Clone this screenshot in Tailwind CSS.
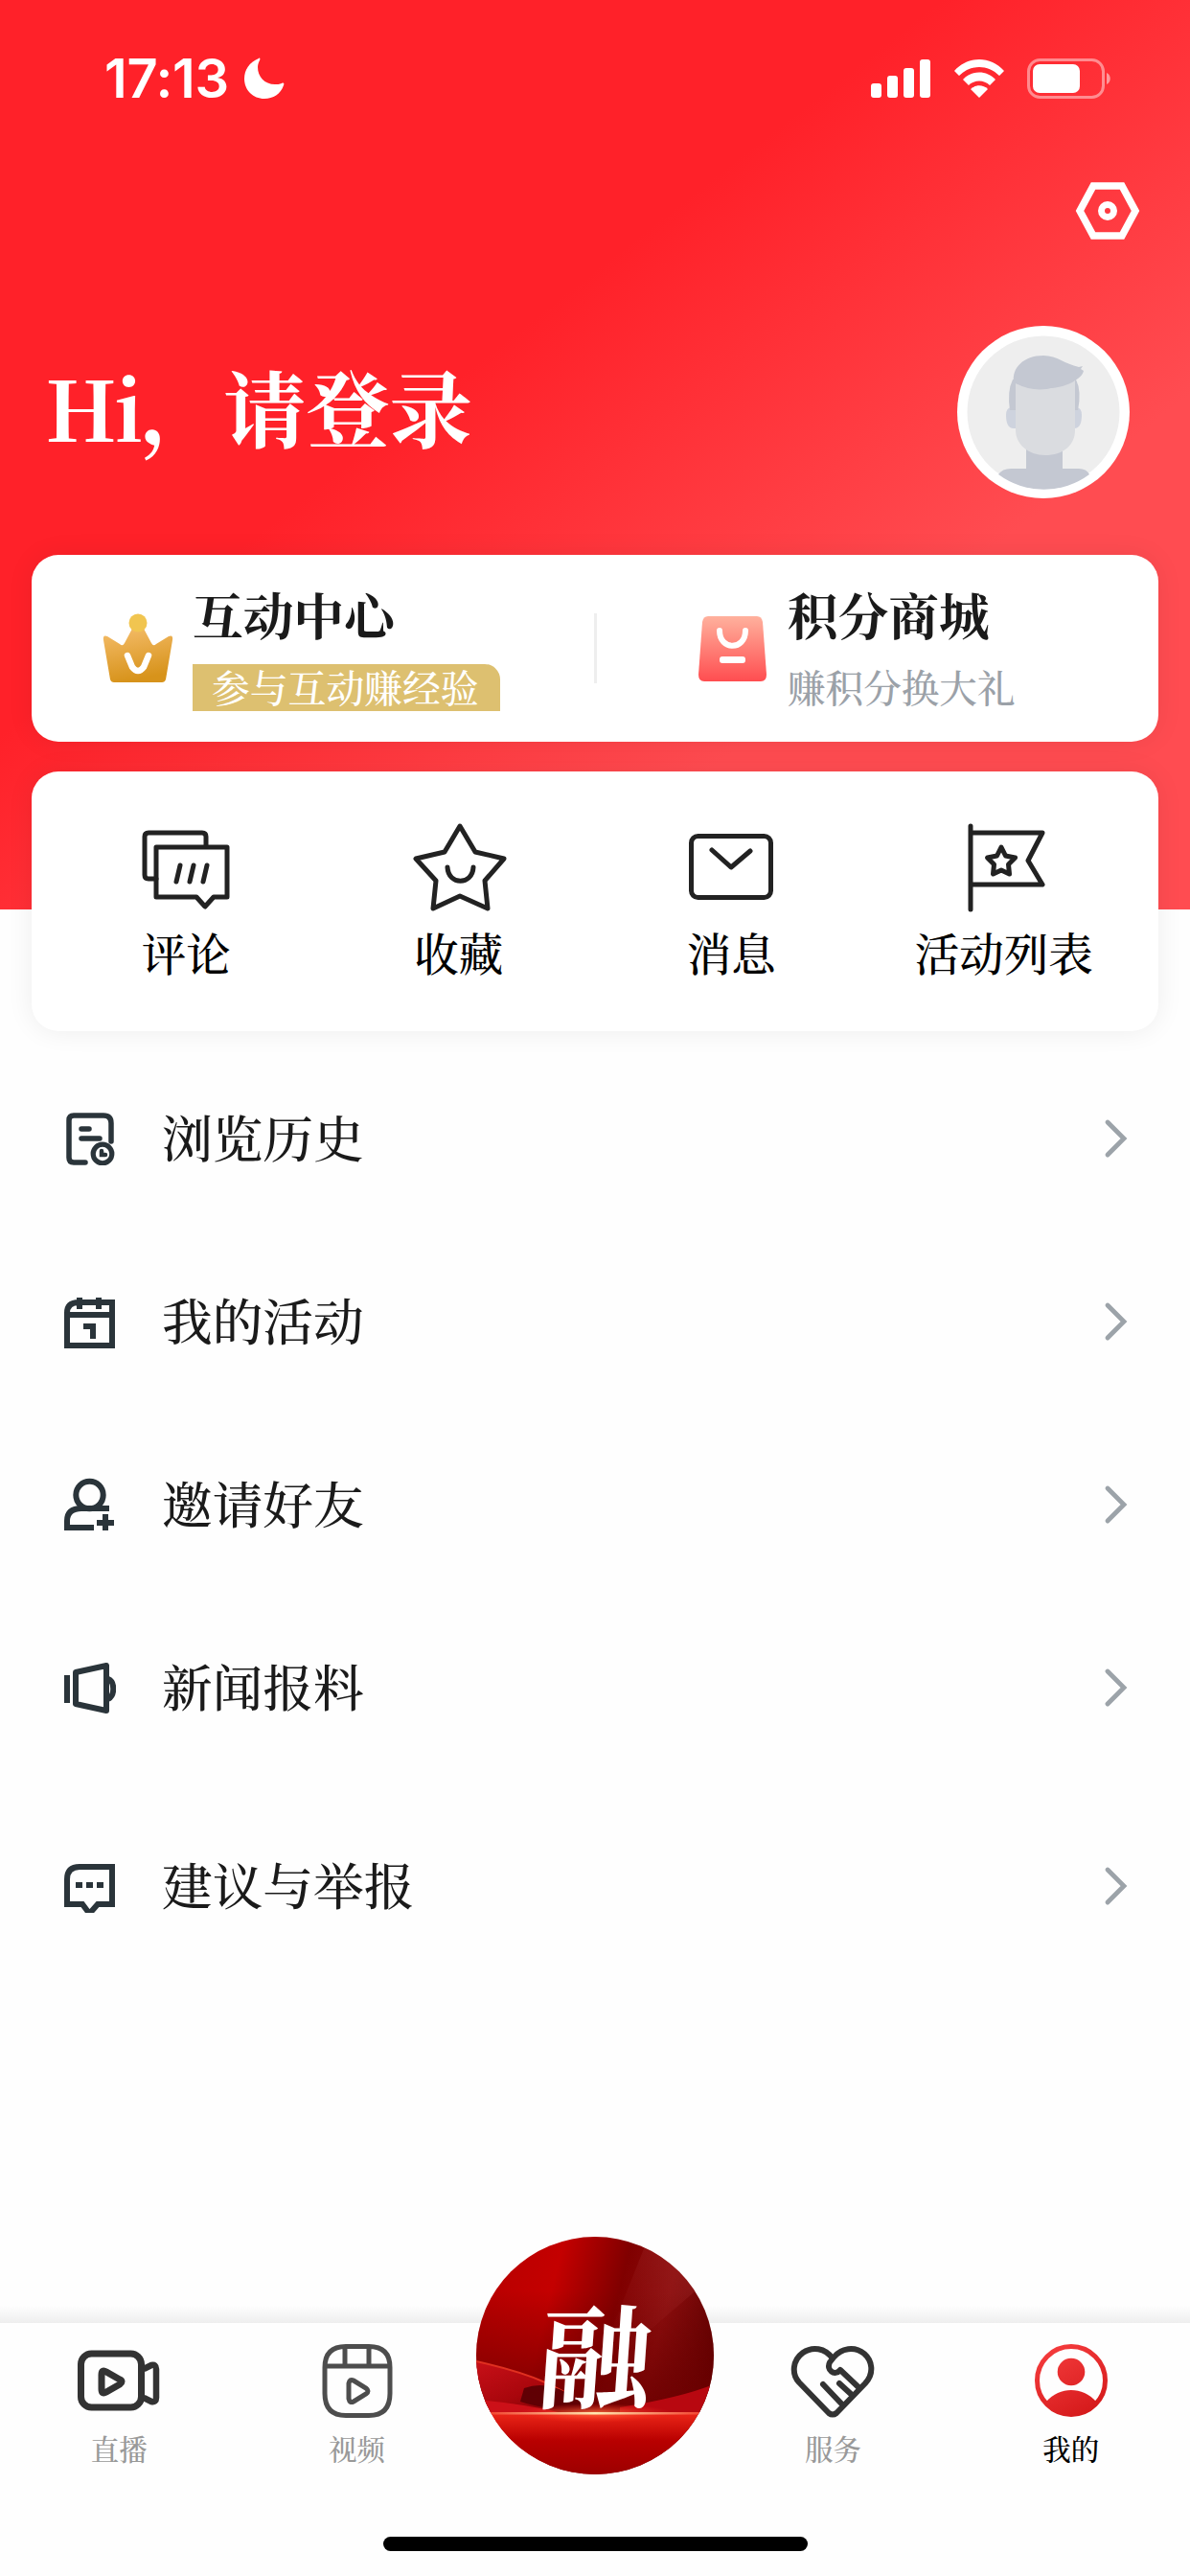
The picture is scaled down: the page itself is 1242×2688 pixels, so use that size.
<!DOCTYPE html>
<html lang="zh-CN">

<head>
    <meta charset="UTF-8">
    <meta name="viewport" content="width=device-width, initial-scale=1.0">
    <title>我的</title>
    <script src="https://cdn.jsdelivr.net/npm/@tailwindcss/browser@4"></script>
    <style>
        body {
            font-family: 'Noto Serif CJK SC', 'Liberation Serif', 'Noto Sans CJK SC', serif;
        }
    </style>
</head>

<body class="bg-[#fefefe] text-[#1a1a1a]">
    <div class="w-[1242px] h-[2688px] flex flex-col overflow-hidden">

        <!-- Header -->
        <header class="h-[949px] shrink-0 px-[33px] bg-[linear-gradient(142deg,#ff2129_40%,#ff4c51_72%)]">
            <!-- Status bar -->
            <div class="h-[164px] flex items-center justify-between pl-[76px] pr-[49px]">
                <div class="flex items-center gap-[15px]">
                    <span class="text-white text-[56px] leading-none font-semibold tracking-[-0.3px] font-['Inter',sans-serif]">17:13</span>
                    <svg class="w-[44px] h-[44px]" viewBox="0 0 44 44" fill="#fff">
                        <path d="M16 1C6 5 1 13 1 22c0 12 9 21 21 21 9 0 17-5 20-14 1-2 0-3-2-2-2 1-5 1-7 1-11 0-18-8-18-18 0-3 1-5 2-7 1-2 0-3-1-2Z" />
                    </svg>
                </div>
                <div class="flex items-center gap-[23px]">
                    <svg class="w-[63px] h-[42px]" viewBox="0 0 63 42" fill="#fff">
                        <rect x="0" y="26" width="11" height="15" rx="3" />
                        <rect x="17" y="18" width="11" height="23" rx="3" />
                        <rect x="34" y="10" width="11" height="31" rx="3" />
                        <rect x="51" y="1" width="11" height="40" rx="3" />
                    </svg>
                    <svg class="w-[54px] h-[42px]" viewBox="0 0 54 42" fill="#fff">
                        <path d="M1 13C15-3 39-3 53 13l-5 5C36 6 18 6 6 18Z" />
                        <path d="M10 22c9-10 25-10 34 0l-6 6c-6-6-16-6-22 0Z" />
                        <path d="M18 32c5-5 13-5 18 0l-9 9Z" />
                    </svg>
                    <svg class="w-[88px] h-[42px]" viewBox="0 0 88 42" fill="none">
                        <rect x="1.5" y="1.5" width="78" height="39" rx="12" stroke="#fff" stroke-opacity=".45" stroke-width="3" />
                        <rect x="6" y="6" width="49" height="30" rx="7" fill="#fff" />
                        <path d="M83 15c5 2 5 10 0 12Z" fill="#fff" fill-opacity=".5" />
                    </svg>
                </div>
            </div>

            <!-- Settings -->
            <div class="h-[112px] flex items-center justify-end pr-[18px]">
                <svg class="w-[70px] h-[64px]" viewBox="0 0 70 64" fill="none" stroke="#fff">
                    <path d="M20 6h30l14 26-14 26H20L6 32Z" stroke-width="7.5" />
                    <circle cx="35" cy="32" r="6.5" stroke-width="7" />
                </svg>
            </div>

            <!-- Greeting -->
            <div class="h-[303px] pt-[64px] pl-[14px] pr-[30px] flex justify-between">
                <div class="h-[169px] flex items-center text-white font-bold text-[87px] whitespace-nowrap"><span class="tracking-[-3px]">Hi</span><span class="tracking-[-0.5px]">，请登录</span></div>
                <svg class="w-[180px] h-[180px]" viewBox="0 0 180 180">
                    <circle cx="90" cy="90" r="90" fill="#fff" />
                    <circle cx="90" cy="90" r="79.5" fill="#eee" />
                    <path d="M43 155q4-6 13-6h16v-20h38v20h17q8 0 11 6a79.500 79.500 0 0 1-95 0Z" fill="#c4c8d2" />
                    <path d="M56 85q-5 1-5 8c0 8 2 14 8 14h63c6 0 8-6 8-14q0-7-5-8Z" fill="#ced3de" />
                    <path d="M55 88q-3-20 3-32h66q6 12 2 32Z" fill="#c4c8d2" />
                    <path d="M61 60q27 14 54-2l8-1v52c0 16-13 26-31 26s-31-12-31-26Z" fill="#dadce0" />
                    <path d="M59 59c-2-15 10-28 31-28 15 0 22 9 37 12l4-1-2 3 3 2c-2 7-8 9-12 12-17 9-42 8-61 0Z" fill="#c4c8d2" />
                </svg>
            </div>

            <!-- Points card -->
            <div class="h-[195px] rounded-[28px] bg-white flex items-center shadow-[0_0_28px_rgba(0,0,0,0.07)]">
                <div class="w-[587px] flex items-center pl-[74px]">
                    <svg class="w-[74px] h-[73px]" viewBox="0 0 74 73">
                        <defs>
                            <linearGradient id="crown" x1="0" y1="0" x2=".25" y2="1">
                                <stop offset="0" stop-color="#f5bd6b" />
                                <stop offset="1" stop-color="#d7931b" />
                            </linearGradient>
                        </defs>
                        <path d="M31 16h12l8 15q2 4 5 1l13-8q5-2 4 4l-7 41q-1 3-4 3H12q-3 0-4-3L1 28q-1-6 4-4l13 8q3 3 5-1Z" fill="url(#crown)" />
                        <circle cx="37" cy="10" r="9.500" fill="#f1c550" />
                        <path d="m26 44 5 12q6 8 12 0l5-12" fill="none" stroke="#fff" stroke-width="6.500" stroke-linecap="round" />
                    </svg>
                    <div class="ml-[20px] mb-[6px] flex flex-col">
                        <div class="h-[76px] text-[52.700px] leading-[70px] font-bold">互动中心</div>
                        <div class="w-[321px] h-[49px] mt-[12px] pl-[20px] rounded-tr-[16px] bg-[#ddc070] text-white text-[39.800px] leading-[45px] font-medium whitespace-nowrap">参与互动赚经验</div>
                    </div>
                </div>
                <div class="w-[3px] h-[73px] bg-[#eee]"></div>
                <div class="flex items-center pl-[106px]">
                    <svg class="w-[71px] h-[68px]" viewBox="0 0 71 68">
                        <defs>
                            <linearGradient id="bag" x1="0" y1="0" x2="0" y2="1">
                                <stop offset="0" stop-color="#ffb19d" />
                                <stop offset="1" stop-color="#ff4d50" />
                            </linearGradient>
                        </defs>
                        <path d="M10 0h51q5 0 6 6l4 55q0 7-6 7H6q-6 0-6-7L4 6q1-6 6-6Z" fill="url(#bag)" />
                        <path d="M22 15c0 21 27 21 27 0" fill="none" stroke="#fff" stroke-width="6" stroke-linecap="round" />
                        <rect x="22" y="42" width="27" height="7" rx="3" fill="#fff" />
                    </svg>
                    <div class="ml-[22px] mb-[6px] flex flex-col">
                        <div class="h-[76px] text-[52.700px] leading-[70px] font-bold">积分商城</div>
                        <div class="h-[49px] mt-[12px] text-[39.600px] leading-[45px] font-medium text-[#9ba1a8] whitespace-nowrap">赚积分换大礼</div>
                    </div>
                </div>
            </div>

            <!-- Shortcuts card -->
            <div class="h-[271px] mt-[31px] rounded-[28px] bg-white grid grid-cols-4 px-[19px] pt-[50px] text-center text-[46.500px] leading-[60px] font-medium text-black shadow-[0_0_28px_rgba(0,0,0,0.07)]">
                <div>
                    <svg class="w-[100px] h-[100px] mx-auto" viewBox="0 0 100 100" fill="none" stroke="#222" stroke-width="5" stroke-linejoin="round" stroke-linecap="round">
                        <path d="M19 62H11q-4 0-4-4V18q0-4 4-4h56q4 0 4 4v10" />
                        <path d="M19 29h74v52H79l-9 10-9-10H19Z" />
                        <path d="m44 48-4 17m18-17-4 17m18-17-4 17" />
                    </svg>
                    <div class="mt-[8px]">评论</div>
                </div>
                <div>
                    <svg class="w-[100px] h-[100px] mx-auto" viewBox="0 0 100 100" fill="none" stroke="#222" stroke-width="5" stroke-linejoin="round" stroke-linecap="round">
                        <path d="m51 7 16 27 30 7-20 23 3 29-29-13-28 13 3-29L5 41l30-7Z" />
                        <path d="M38 50c1 19 26 19 27 0" />
                    </svg>
                    <div class="mt-[8px]">收藏</div>
                </div>
                <div>
                    <svg class="w-[100px] h-[100px] mx-auto" viewBox="0 0 100 100" fill="none" stroke="#222" stroke-width="5" stroke-linejoin="round" stroke-linecap="round">
                        <rect x="8.500" y="17.500" width="83" height="64" rx="7" />
                        <path d="m30 32 20 18 20-17" />
                    </svg>
                    <div class="mt-[8px]">消息</div>
                </div>
                <div>
                    <svg class="w-[100px] h-[100px] mx-auto" viewBox="0 0 100 100" fill="none" stroke="#222" stroke-width="5" stroke-linejoin="round" stroke-linecap="round">
                        <path d="M15 7v87M15 14h75L75 43l15 25H15" />
                        <path d="m47 29 4.500 9 10 2-7 7 1 10-8.500-4-8.500 4 1-10-7-7 10-2Z" />
                    </svg>
                    <div class="mt-[8px]">活动列表</div>
                </div>
            </div>
        </header>

        <!-- Menu list -->
        <main class="flex-1 pt-[143px] pl-[67px] pr-[64px] text-[52.700px] leading-none font-medium">
            <div class="h-[191px] flex items-center">
                <svg class="w-[54px] h-[56px]" viewBox="0 0 54 56" fill="none" stroke="#2a343a" stroke-width="6" stroke-linecap="round">
                    <path d="M22 53H10q-5 0-5-5V9q0-5 5-5h31q8 0 8 8v19M18 18h8M18 28h19" stroke-width="5.500" />
                    <circle cx="40" cy="44" r="9.800" stroke-width="5.200" />
                    <path d="M39 41v4h4" stroke-width="4.500" />
                </svg>
                <span class="flex-1 ml-[48px] pb-[5px]">浏览历史</span>
                <svg class="w-[26px] h-[42px]" viewBox="0 0 26 42" fill="none" stroke="#9ca3a9" stroke-width="4.800" stroke-linecap="round"><path d="m4 4 17 17L4 38" /></svg>
            </div>
            <div class="h-[191px] flex items-center">
                <svg class="w-[54px] h-[56px]" viewBox="0 0 54 56" fill="none" stroke="#2a343a" stroke-width="6">
                    <path d="M3 53V19Q3 8 15 8h35v45ZM3 21h47M16 3v12M36 3v12" />
                    <path d="M20 33h10v13" />
                </svg>
                <span class="flex-1 ml-[48px] pb-[5px]">我的活动</span>
                <svg class="w-[26px] h-[42px]" viewBox="0 0 26 42" fill="none" stroke="#9ca3a9" stroke-width="4.800" stroke-linecap="round"><path d="m4 4 17 17L4 38" /></svg>
            </div>
            <div class="h-[191px] flex items-center">
                <svg class="w-[54px] h-[56px]" viewBox="0 0 54 56" fill="none" stroke="#2a343a" stroke-width="6">
                    <circle cx="26.500" cy="18" r="14.200" />
                    <path d="M47 32H18Q3 32 3 45v7h28M34 47h18M43 38v17" />
                </svg>
                <span class="flex-1 ml-[48px] pb-[5px]">邀请好友</span>
                <svg class="w-[26px] h-[42px]" viewBox="0 0 26 42" fill="none" stroke="#9ca3a9" stroke-width="4.800" stroke-linecap="round"><path d="m4 4 17 17L4 38" /></svg>
            </div>
            <div class="h-[191px] flex items-center">
                <svg class="w-[54px] h-[56px]" viewBox="0 0 54 56" fill="none" stroke="#2a343a" stroke-width="6">
                    <path d="M3 15v29" />
                    <path d="M12 12 44 5v47l-32-7Z" stroke-linejoin="round" />
                    <path d="M46 19c7 3 7 17 0 21" />
                </svg>
                <span class="flex-1 ml-[48px] pb-[5px]">新闻报料</span>
                <svg class="w-[26px] h-[42px]" viewBox="0 0 26 42" fill="none" stroke="#9ca3a9" stroke-width="4.800" stroke-linecap="round"><path d="m4 4 17 17L4 38" /></svg>
            </div>
            <div class="h-[191px] mt-[16px] flex items-center">
                <svg class="w-[54px] h-[56px]" viewBox="0 0 54 56" fill="none" stroke="#2a343a" stroke-width="6">
                    <path d="M3 47V21Q3 8 16 8h34v39H35l-7 8h-3l-6-8Z" />
                    <path d="M12 27h7M23 27h7M34 27h7" />
                </svg>
                <span class="flex-1 ml-[48px] pb-[5px]">建议与举报</span>
                <svg class="w-[26px] h-[42px]" viewBox="0 0 26 42" fill="none" stroke="#9ca3a9" stroke-width="4.800" stroke-linecap="round"><path d="m4 4 17 17L4 38" /></svg>
            </div>
        </main>

        <!-- Tab bar -->
        <div class="h-[18px] shrink-0 bg-linear-to-b from-[#fefefe] to-[#eeeeee]"></div>
        <footer class="h-[264px] shrink-0 bg-[#fefefe] flex flex-col items-center">
            <nav class="h-[223px] w-full grid grid-cols-5 text-center text-[29.500px] leading-[40px] font-medium text-[#999]">
                <div class="pt-[18px]">
                    <svg class="w-[88px] h-[84px] mx-auto" viewBox="0 0 88 84" fill="none" stroke="#333" stroke-width="7" stroke-linejoin="round">
                        <rect x="4.500" y="14" width="63" height="56" rx="11" />
                        <path d="m70 30 8-4q5-1 5 4v30q0 5-5 4l-8-4" stroke-width="6.500" />
                        <path d="M26 36q0-6 5-3l14 8q4 2 0 5l-14 8q-5 3-5-3Z" />
                    </svg>
                    <div class="mt-[8px]">直播</div>
                </div>
                <div class="pt-[18px]">
                    <svg class="w-[84px] h-[84px] mx-auto" viewBox="0 0 84 84" fill="none" stroke="#4d4d4d" stroke-width="5">
                        <path d="M30 6.500h24q22 0 22 22v27q0 23-22 23H30q-22 0-22-23v-27q0-22 22-22ZM8 27h68M29 7v20M54 7v20" />
                        <path d="M33 45q1-5 5-3l13 8q4 3 0 6l-13 8q-4 2-5-3Z" />
                    </svg>
                    <div class="mt-[8px]">视频</div>
                </div>
                <div class="relative">
                    <!-- Raised centre button -->
                    <div class="absolute left-0 -top-[90px] w-[248px] h-[248px] rounded-full overflow-hidden">
                        <svg class="w-[248px] h-[248px]" viewBox="0 0 248 248">
                            <defs>
                                <linearGradient id="drape" x1="0" y1=".3" x2="1" y2=".55">
                                    <stop offset="0" stop-color="#b80000" />
                                    <stop offset=".28" stop-color="#c40000" />
                                    <stop offset=".55" stop-color="#800000" />
                                    <stop offset=".75" stop-color="#8c0e0e" />
                                    <stop offset="1" stop-color="#5c0000" />
                                </linearGradient>
                                <linearGradient id="shade" x1="0" y1="0" x2="0" y2="1">
                                    <stop offset=".3" stop-color="#6d0000" stop-opacity="0" />
                                    <stop offset="1" stop-color="#6d0000" stop-opacity=".9" />
                                </linearGradient>
                                <linearGradient id="beam" x1="0" y1="1" x2="1" y2="0">
                                    <stop offset=".2" stop-color="#a02020" stop-opacity="0" />
                                    <stop offset="1" stop-color="#a03030" stop-opacity=".5" />
                                </linearGradient>
                                <linearGradient id="silk" x1="0" y1="0" x2="1" y2="1">
                                    <stop offset="0" stop-color="#c81018" />
                                    <stop offset=".5" stop-color="#a8060c" />
                                    <stop offset="1" stop-color="#580000" />
                                </linearGradient>
                                <linearGradient id="floor" x1="0" y1="0" x2="0" y2="1">
                                    <stop offset="0" stop-color="#ec2618" />
                                    <stop offset=".45" stop-color="#b80000" />
                                    <stop offset="1" stop-color="#9c0000" />
                                </linearGradient>
                                <linearGradient id="line" x1="0" y1="0" x2="1" y2="0">
                                    <stop offset="0" stop-color="#f03020" />
                                    <stop offset=".5" stop-color="#ffe8b0" />
                                    <stop offset="1" stop-color="#f03020" />
                                </linearGradient>
                                <radialGradient id="glow">
                                    <stop offset="0" stop-color="#ff7040" stop-opacity=".9" />
                                    <stop offset="1" stop-color="#ff3020" stop-opacity="0" />
                                </radialGradient>
                            </defs>
                            <rect width="248" height="248" fill="url(#drape)" />
                            <rect width="248" height="184" fill="url(#shade)" />
                            <path d="M180 0 248 40 120 150Z" fill="url(#beam)" />
                            <path d="M0 130q45 10 72 22l60 32H0Z" fill="url(#silk)" />
                            <path d="M0 130q45 10 72 22l24 12" fill="none" stroke="#e03020" stroke-width="2" />
                            <path d="M50 158q35-12 70 26-50-4-74-12Z" fill="#600004" />
                            <path d="M0 170q50 4 90 14H0Z" fill="#cc1018" />
                            <path d="M248 154q-35 14-98 24v6h98Z" fill="#b80810" />
                            <rect y="184" width="248" height="64" fill="url(#floor)" />
                            <ellipse cx="124" cy="184" rx="80" ry="10" fill="url(#glow)" />
                            <rect y="183" width="248" height="2.500" fill="url(#line)" />
                        </svg>
                        <span class="absolute left-[66px] top-[60px] text-white text-[118px] leading-none font-bold skew-x-[-4deg]">融</span>
                    </div>
                </div>
                <div class="pt-[18px]">
                    <svg class="w-[88px] h-[84px] mx-auto" viewBox="0 0 88 84" fill="none" stroke="#333" stroke-width="6" stroke-linecap="round" stroke-linejoin="round">
                        <path d="M44 19C36 8 23 6 13 13 2 21 1 35 9 44l31 32q4 3 8 0l30-31c10-11 7-24-1-31-10-8-24-6-32 4l-4 5c-4 8 5 15 11 8l19 18" />
                        <path d="m34 46 19 20M51 45l12 11" />
                    </svg>
                    <div class="mt-[8px]">服务</div>
                </div>
                <div class="pt-[18px]">
                    <svg class="w-[84px] h-[84px] mx-auto" viewBox="0 0 84 84">
                        <defs>
                            <linearGradient id="me" gradientUnits="userSpaceOnUse" x1="15" y1="8" x2="55" y2="80">
                                <stop offset="0" stop-color="#f53c3d" />
                                <stop offset="1" stop-color="#d51a1b" />
                            </linearGradient>
                        </defs>
                        <circle cx="42" cy="42" r="35.500" fill="none" stroke="url(#me)" stroke-width="5" />
                        <circle cx="42" cy="33" r="14.300" fill="url(#me)" />
                        <path d="M16 64c14-16 38-16 52 0-14 20-40 19-52 0Z" fill="url(#me)" />
                    </svg>
                    <div class="mt-[8px] text-black">我的</div>
                </div>
            </nav>
            <div class="w-[443px] h-[15px] rounded-full bg-black"></div>
        </footer>
    </div>
</body>

</html>
